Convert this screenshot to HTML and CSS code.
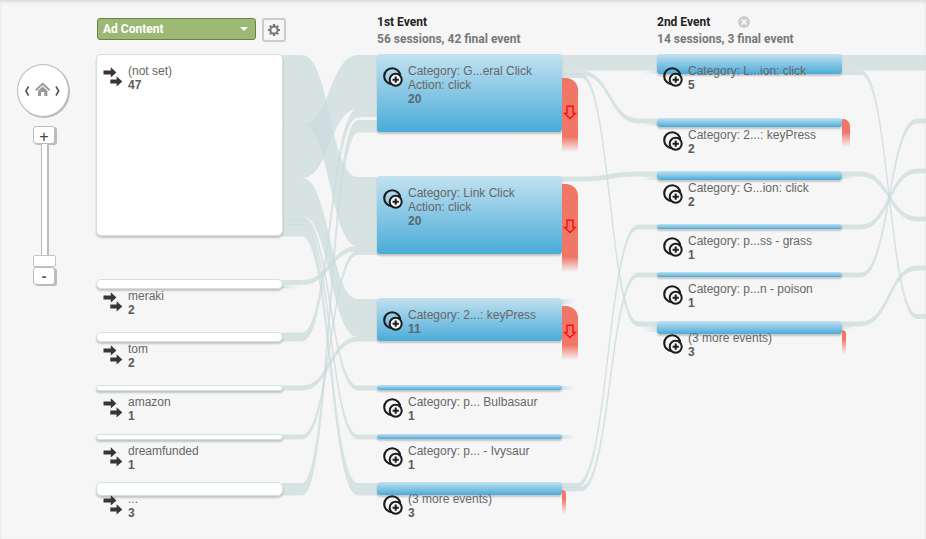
FILE: index.html
```html
<!DOCTYPE html>
<html lang="en">
<head>
<meta charset="utf-8">
<title>Events Flow</title>
<link rel="stylesheet" href="styles.css">
</head>
<body>
<svg class="defs" width="0" height="0">
  <defs>
    <symbol id="arrows" viewBox="0 0 20 20">
      <path d="M0.500 3.600H7.800V0.300L13.400 5.500L7.800 10.600V7.400H0.500zM7.300 12.500H13.600V9.200L19.300 14.400L13.600 19.500V16.400H7.300z" fill="#393536"/>
    </symbol>
    <symbol id="event" viewBox="0 0 20 20">
      <circle cx="9.200" cy="9.200" r="8" fill="none" stroke="#1c1c1c" stroke-width="2.100"/>
      <circle cx="12.700" cy="12.700" r="6" class="lens" stroke="#1c1c1c" stroke-width="2"/>
      <path d="M12.700 9.600v6.200M9.600 12.700h6.200" stroke="#1c1c1c" stroke-width="2"/>
    </symbol>
    <symbol id="down" viewBox="0 0 14 15">
      <path d="M4 1.200H10V8.400H12.400L7 13.600L1.600 8.400H4z" fill="none" stroke="#f90d0d" stroke-width="1.400"/>
    </symbol>
  </defs>
</svg>
<div class="page">
  <svg class="ribbons" viewBox="0 0 926 539">
    <defs>
      <linearGradient id="fadeOut"><stop offset="0" stop-color="#d8e4e4"/><stop offset="1" stop-color="#d8e4e4" stop-opacity="0"/></linearGradient>
      <linearGradient id="fadeIn"><stop offset="0" stop-color="#d8e4e4" stop-opacity="0"/><stop offset="1" stop-color="#d8e4e4"/></linearGradient>
    </defs>
    <g class="flow">
      <path class="wide" d="M282 124H302C330 124 330 55 358 55H378V109H358C330 109 330 178 302 178H282z"/>
      <path class="wide" d="M282 55H302C330 55 330 177 358 177H378V246.500H358C330 246.500 330 124.500 302 124.500H282z"/>
      <path class="wide" d="M282 178H302C330 178 330 299 358 299H378V337H358C330 337 330 216 302 216H282z"/>
      <path d="M282 216.500H302C330 216.500 330 386 358 386H378V390H358C330 390 330 220.500 302 220.500H282z"/>
      <path d="M282 220.500H302C330 220.500 330 435 358 435H378V439H358C330 439 330 224.500 302 224.500H282z"/>
      <path d="M282 224.500H302C330 224.500 330 483.500 358 483.500H378V495H358C330 495 330 236 302 236H282z"/>
      <path d="M282 280.500H302C330 280.500 330 246.500 358 246.500H378V250.500H358C330 250.500 330 284.500 302 284.500H282z"/>
      <path d="M282 333H302C330 333 330 109 358 109H378V117H358C330 117 330 341 302 341H282z"/>
      <path d="M282 386H302C330 386 330 337 358 337H378V341H358C330 341 330 390 302 390H282z"/>
      <path d="M282 435H302C330 435 330 250.500 358 250.500H378V254.500H358C330 254.500 330 439 302 439H282z"/>
      <path d="M282 483.500H302C330 483.500 330 120.500 358 120.500H378V132H358C330 132 330 495 302 495H282z"/>

      <path class="wide" d="M561 55H658V70.500H561z"/>
      <path d="M561 71H581C610 71 610 119 638 119H658V123H638C610 123 610 74.500 581 74.500H561z"/>
      <path d="M561 74H581C610 74 610 322 638 322H658V326H638C610 326 610 77.500 581 77.500H561z"/>
      <path d="M561 177H581C610 177 610 172 638 172H658V176H638C610 176 610 181 581 181H561z"/>
      <path d="M561 483.500H577C608 483.500 608 225 638 225H658V229H638C608 229 608 487.500 577 487.500H561z"/>
      <path d="M561 487H581C610 487 610 273 638 273H658V277H638C610 277 610 491 581 491H561z"/>

      <path class="wide" d="M841 55H928V70.500H841z"/>
      <path d="M841 71H861C889 71 889 314.500 917 314.500H928V318.500H917C889 318.500 889 74.500 861 74.500H841z"/>
      <path d="M841 172H861C889 172 889 217 917 217H928V221H917C889 221 889 176 861 176H841z"/>
      <path d="M841 225H861C889 225 889 169 917 169H928V173H917C889 173 889 229 861 229H841z"/>
      <path d="M841 273H861C889 273 889 119 917 119H928V123H917C889 123 889 277 861 277H841z"/>
      <path d="M841 322H861C889 322 889 266 917 266H928V270H917C889 270 889 326 861 326H841z"/>
    </g>
    <g fill="url(#fadeOut)">
      <rect x="282" y="284.500" width="18" height="4"/>
      <rect x="562" y="299" width="14" height="5"/>
      <rect x="562" y="386" width="14" height="4"/>
      <rect x="562" y="435" width="14" height="4"/>
      <rect x="842" y="176" width="12" height="3"/>
      <rect x="842" y="326" width="12" height="3"/>
    </g>
    <g fill="url(#fadeIn)">
      <rect x="642" y="70.500" width="15" height="3"/>
      <rect x="642" y="123" width="15" height="3"/>
      <rect x="642" y="176" width="15" height="4"/>
      <rect x="642" y="326" width="15" height="6"/>
    </g>
    <rect x="360" y="117" width="17" height="3" class="gap"/>
  </svg>

  <aside class="nav">
    <div class="dial">
      <svg viewBox="0 0 52 52" width="52" height="52">
        <path d="M11.600 22.500L8.900 27L11.600 31.500M39 22.500L41.700 27L39 31.500" fill="none" stroke="#555" stroke-width="1.600"/>
        <path d="M18.700 26.300L25.700 19.900L32.700 26.300" fill="none" stroke="#999" stroke-width="1.900"/>
        <path d="M21 26.700L25.700 22.600L30.400 26.700V31.900H27.300V27.900H24.100V31.900H21z" fill="#999"/>
      </svg>
    </div>
    <div class="zoom-btn plus">+</div>
    <div class="track"></div>
    <div class="thumb"></div>
    <div class="zoom-btn minus">-</div>
  </aside>

  <main class="board">
    <section class="column">
      <header class="tools">
        <div class="select"><span>Ad Content</span><i class="caret"></i></div>
        <div class="gear">
          <svg viewBox="-8 -8 16 16" width="16" height="16">
            <circle r="3.600" fill="none" stroke="#777" stroke-width="2"/>
            <g stroke="#777" stroke-width="2.200">
              <path d="M0 -6V-4M0 6V4M-6 0H-4M6 0H4M-4.200 -4.200L-3 -3M4.200 4.200L3 3M-4.200 4.200L-3 3M4.200 -4.200L3 -3"/>
            </g>
          </svg>
        </div>
      </header>
      <div class="nodes sources">
        <div class="node"><div class="bar h47"></div><div class="label"><svg><use href="#arrows"/></svg><p>(not set)<b>47</b></p></div></div>
        <div class="node"><div class="bar h2"></div><div class="label"><svg><use href="#arrows"/></svg><p>meraki<b>2</b></p></div></div>
        <div class="node"><div class="bar h2"></div><div class="label"><svg><use href="#arrows"/></svg><p>tom<b>2</b></p></div></div>
        <div class="node"><div class="bar h1"></div><div class="label"><svg><use href="#arrows"/></svg><p>amazon<b>1</b></p></div></div>
        <div class="node"><div class="bar h1"></div><div class="label"><svg><use href="#arrows"/></svg><p>dreamfunded<b>1</b></p></div></div>
        <div class="node"><div class="bar h3"></div><div class="label"><svg><use href="#arrows"/></svg><p>...<b>3</b></p></div></div>
      </div>
    </section>

    <section class="column">
      <header class="title"><h2>1st Event</h2><h3>56 sessions, 42 final event</h3></header>
      <div class="nodes first">
        <div class="node"><div class="bar h20"></div><div class="drop d1"><svg><use href="#down"/></svg></div><div class="label tinted"><svg><use href="#event"/></svg><p>Category: G...eral Click<br>Action: click<b>20</b></p></div></div>
        <div class="node"><div class="bar h20"></div><div class="drop d2"><svg><use href="#down"/></svg></div><div class="label tinted"><svg><use href="#event"/></svg><p>Category: Link Click<br>Action: click<b>20</b></p></div></div>
        <div class="node"><div class="bar h11"></div><div class="drop d3"><svg><use href="#down"/></svg></div><div class="label tinted"><svg><use href="#event"/></svg><p>Category: 2...: keyPress<b>11</b></p></div></div>
        <div class="node"><div class="bar h1"></div><div class="label"><svg><use href="#event"/></svg><p>Category: p... Bulbasaur<b>1</b></p></div></div>
        <div class="node"><div class="bar h1"></div><div class="label"><svg><use href="#event"/></svg><p>Category: p... - Ivysaur<b>1</b></p></div></div>
        <div class="node"><div class="bar h3"></div><div class="drop d4"></div><div class="label"><svg><use href="#event"/></svg><p>(3 more events)<b>3</b></p></div></div>
      </div>
    </section>

    <section class="column">
      <header class="title">
        <div class="title-row"><h2>2nd Event</h2>
          <svg class="close" viewBox="0 0 12 12"><circle cx="6" cy="6" r="6" fill="#ccc"/><path d="M3.500 3.500L8.500 8.500M8.500 3.500L3.500 8.500" stroke="#fff" stroke-width="1.400"/></svg>
        </div>
        <h3>14 sessions, 3 final event</h3>
      </header>
      <div class="nodes second">
        <div class="node"><div class="bar h5"></div><div class="label"><svg><use href="#event"/></svg><p>Category: L...ion: click<b>5</b></p></div></div>
        <div class="node"><div class="bar h2"></div><div class="drop d5"></div><div class="label"><svg><use href="#event"/></svg><p>Category: 2...: keyPress<b>2</b></p></div></div>
        <div class="node"><div class="bar h2"></div><div class="label"><svg><use href="#event"/></svg><p>Category: G...ion: click<b>2</b></p></div></div>
        <div class="node"><div class="bar h1"></div><div class="label"><svg><use href="#event"/></svg><p>Category: p...ss - grass<b>1</b></p></div></div>
        <div class="node"><div class="bar h1"></div><div class="label"><svg><use href="#event"/></svg><p>Category: p...n - poison<b>1</b></p></div></div>
        <div class="node"><div class="bar h3"></div><div class="drop d6"></div><div class="label"><svg><use href="#event"/></svg><p>(3 more events)<b>3</b></p></div></div>
      </div>
    </section>
  </main>
</div>
</body>
</html>
```
FILE: styles.css
```css
* { box-sizing: border-box; }
body, p, h2, h3 { margin: 0; }
body {
  background: #f6f6f6;
  font: 12px/14px "Liberation Sans", Arial, sans-serif;
  color: #666;
}
.defs { position: absolute; }
.page {
  position: relative;
  display: flex;
  width: 926px;
  height: 539px;
  overflow: hidden;
  box-shadow: inset 0 2px 3px #dcdcdc;
}
.ribbons { position: absolute; inset: 0; width: 926px; height: 539px; }
.flow path { fill: #cbdcdc; stroke: #cbdcdc; stroke-width: 1px; opacity: .7; }
.flow .wide { stroke: none; }
.gap { fill: #f6f6f6; fill-opacity: .7; }

/* navigation */
.nav {
  width: 96px;
  flex: none;
  padding: 64px 0 0 17px;
  display: flex;
  flex-direction: column;
  align-items: flex-start;
  position: relative;
}
.dial {
  width: 52px;
  height: 53px;
  border: 1px solid #bbb;
  border-radius: 50%;
  background: #fff;
  box-shadow: 1px 1px 0 #bbb;
}
.dial svg { display: block; margin: -1px; }
.zoom-btn {
  width: 22px;
  height: 18px;
  margin-left: 16px;
  border: 1px solid #bbb;
  border-radius: 3px;
  background: #fff;
  box-shadow: 2px 1px 0 #bbb;
  text-align: center;
  color: #444;
}
.plus { margin-top: 9px; font-size: 16px; line-height: 19px; }
.minus { font-size: 14px; font-weight: bold; line-height: 17px; color: #555; }
.track {
  width: 8px;
  height: 111px;
  margin-left: 24px;
  position: relative;
  background: #fff;
  border-left: 1px solid #bbb;
  border-right: 2px solid #bbb;
}
.thumb {
  width: 23px;
  height: 12px;
  margin-left: 16px;
  border: 1px solid #c4c4c4;
  border-radius: 2px;
  background: #fff;
}

/* columns */
.board { display: grid; grid-template-columns: 280px 280px 269px; position: relative; }
.column { display: grid; grid-template-rows: 54px 1fr; }
.tools { display: flex; gap: 6px; padding: 18px 0 0 1px; align-items: flex-start; }
.select {
  width: 159px;
  height: 22px;
  padding: 0 7px 0 5px;
  display: flex;
  align-items: center;
  justify-content: space-between;
  background: #9db775;
  border: 1px solid #6a8440;
  border-radius: 3px;
  color: #fff;
  font: bold 12px/20px Roboto, sans-serif;
}
.caret { border: 4px solid transparent; border-top: 4px solid #fff; border-bottom: 0; }
.gear {
  width: 24px;
  height: 24px;
  border: 2px solid #ccc;
  border-radius: 3px;
  display: grid;
  place-items: center;
}
.title { padding: 14px 0 0 1px; font-family: Roboto, sans-serif; }
.title-row { display: flex; gap: 28px; align-items: center; }
h2, h3 { font-size: 12px; font-weight: bold; }
h2 { color: #222; line-height: 16px; }
h3 { color: #777; line-height: 18px; }
.close { width: 12px; height: 12px; }

.nodes { display: grid; }
.sources { grid-template-rows: 225px 53px 53px 49px 48px 50px; }
.first { grid-template-rows: 122px 122px 87px 49px 48px 50px; }
.second { grid-template-rows: 64px 53px 53px 48px 49px 50px; }
.node { display: grid; position: relative; align-items: start; grid-template-columns: 187px; }
.bar, .label { grid-area: 1 / 1; }
.bar {
  margin: 0 1px;
  border-radius: 3px;
  background: linear-gradient(#c2e2f1, #4aabd8);
  box-shadow: 0 2px 2px rgba(0, 0, 0, .2);
}
.sources .bar {
  margin: 0;
  background: #fff;
  border: 1px solid #d3e0e0;
  border-radius: 5px;
}
.h47 { height: 182px; }
.h20 { height: 78px; }
.h11 { height: 43px; }
.bar.h5 { height: 20px; }
.bar.h3 { height: 13px; }
.sources .h3 { height: 14px; }
.h2 { height: 9px; }
.sources .h2 { height: 10px; }
.h1 { height: 5px; }
.sources .h1 { height: 6px; }
.label {
  display: flex;
  gap: 5px;
  padding: 10px 0 0 7px;
  position: relative;
}
.label svg { width: 20px; height: 20px; margin: 2.5px .5px 0 -.5px; }
.label b { display: block; color: #5a5a5a; }
.lens { fill: #f6f6f6; }
.tinted .lens, .tinted { fill: #9fd0e8; }
.tinted b { color: #586871; }

/* drop-offs hang off the right edge of a bar */
.drop {
  position: absolute;
  left: 186px;
  width: 16px;
  border-top-right-radius: 12px;
  background: linear-gradient(#f07768 calc(100% - 15px), rgba(240, 119, 104, 0));
}
.drop svg { position: absolute; left: 1px; width: 14px; height: 15px; }
.d1 { top: 24px; height: 74px; }
.d1 svg { top: 27px; }
.d2 { top: 8px; height: 88px; }
.d2 svg { top: 35px; }
.d3 { top: 8px; height: 54px; }
.d3 svg { top: 18px; }
.d4 { top: 8px; width: 4px; height: 24px; border-top-right-radius: 4px; }
.d5 { top: 1px; width: 8px; height: 28px; border-top-right-radius: 7px; }
.d6 { top: 9px; width: 4px; height: 24px; border-top-right-radius: 4px; }
```
